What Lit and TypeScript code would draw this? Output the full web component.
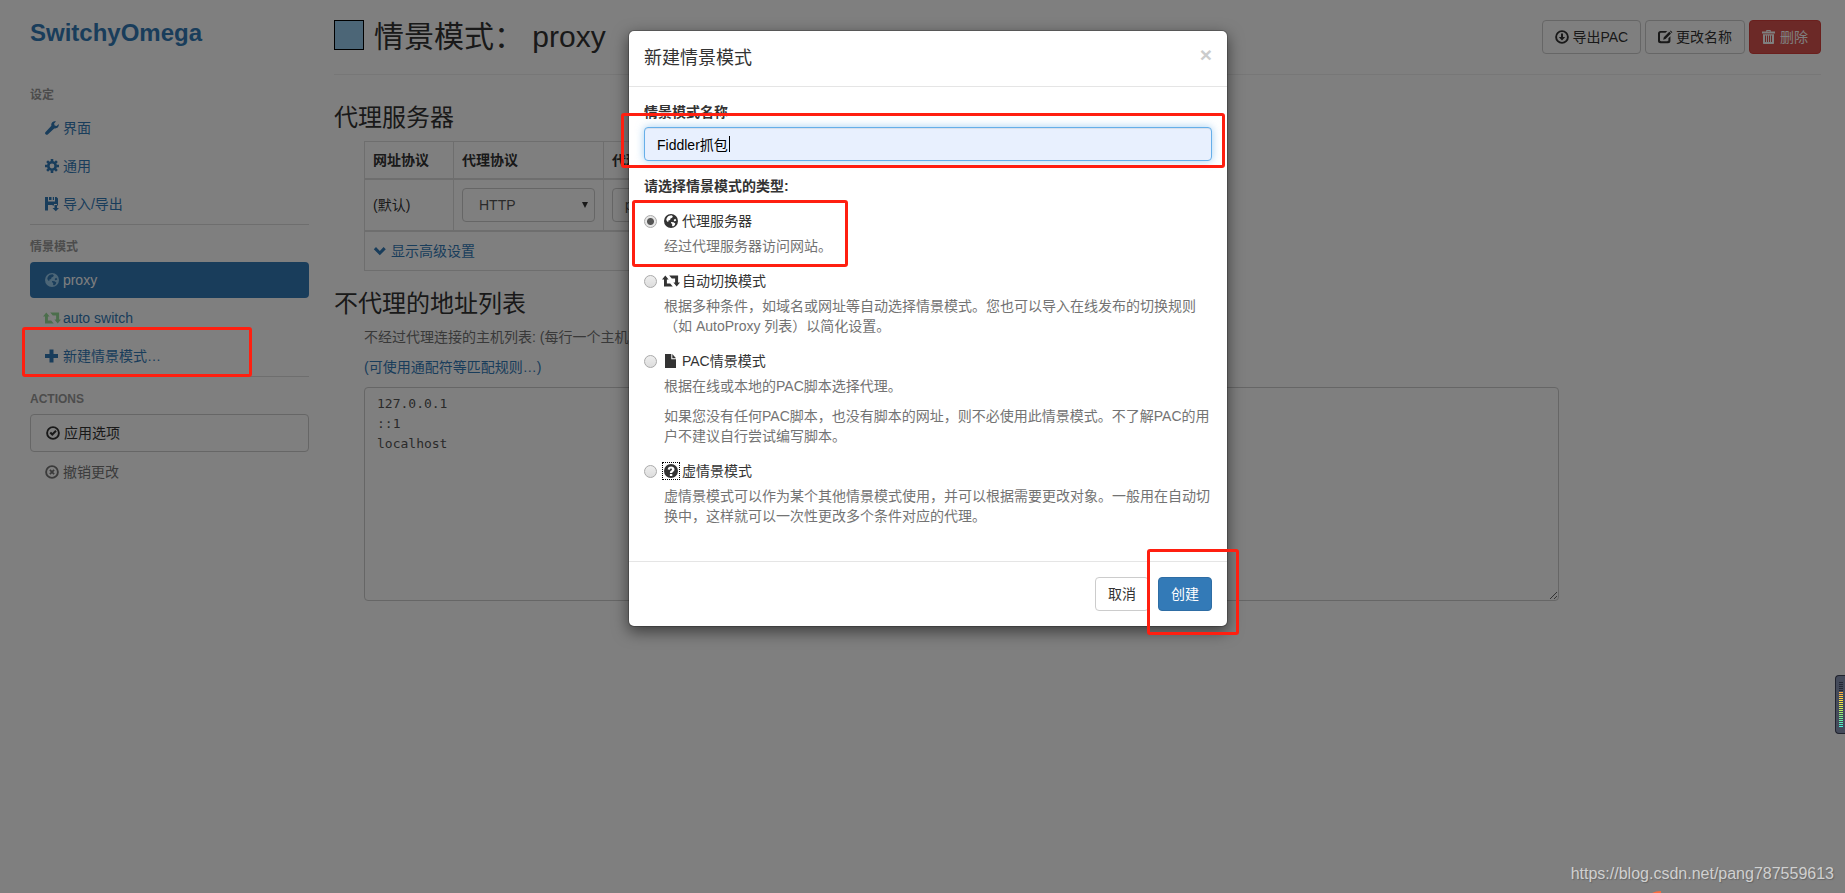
import { LitElement, html, svg, css } from "lit";
import { customElement, state } from "lit/decorators.js";

const glyphs: Record<string, unknown> = {
  wrench: svg`<path d="M13.7 3.1 11.7 5 9.6 4.5 9.1 2.4 11 .4C8.900-.3 6.700.9 6.300 3c-.1.700-.1 1.200.1 1.800L.6 10.900c-.7.700-.7 1.700 0 2.400s1.700.700 2.400 0l6.200-5.900c2.600.7 5-1.500 4.500-4.300z"/>`,
  cog: svg`<circle cx="7" cy="7" r="3.7" fill="none" stroke="currentColor" stroke-width="2.6"/><path fill="none" stroke="currentColor" stroke-width="2.6" d="M7 0v2.500M7 11.500V14M0 7h2.500M11.500 7H14M2.100 2.100l1.700 1.700M10.200 10.200l1.700 1.700M2.100 11.900l1.700-1.700M10.200 3.800l1.700-1.700"/>`,
  save: svg`<path d="M0 0h3v4.500h7V0h1.500L13 1.500V8.500h-1V7H9v1.500H7.500V8H3v5.500H0zM4 0h2.500v3H4zM7.800 0H9v3H7.800zM9.500 8h2.500v3h2l-3.200 3.300L7.500 11h2z"/>`,
  globe: svg`<path fill-rule="evenodd" d="M7 0a7 7 0 1 0 0 14A7 7 0 0 0 7 0zM5.200 1.700l2.300-.4 1.300 1-.6 1.500-1.700.8-.4 1.500-2 .6.4 1.200-1.400-.5-.8-1.700C2.700 3.600 3.700 2.300 5.200 1.700zM9.800 5.800l1.500-1 1 1.400-.8.900-1.500.1zM7.200 8l2.300.3 1.800 1.200-.6 1.700L9 12.500l-.9-.8.1-1.700-1.300-.9z"/>`,
  retweet: svg`<path d="M-2 5.500 1.300 1.500 4.600 5.500H2.900V9.500H6.200L8.800 12.500H0V5.500zM5.200 1.500h8.900v7H16L12.700 12.500 9.400 8.500h1.700v-4H7.800z"/>`,
  plus: svg`<path d="M4.500.5h4v4.500h4.500v4H8.500v4.500h-4V9H0V5h4.500z"/>`,
  ok: svg`<circle cx="7" cy="7" r="5.900" fill="none" stroke="currentColor" stroke-width="1.900"/><path d="M3.500 7.200 5 5.800l1.300 1.300 3-3 1.400 1.400-4.400 4.500z"/>`,
  remove: svg`<circle cx="7" cy="7" r="5.900" fill="none" stroke="currentColor" stroke-width="1.900"/><path fill="none" stroke="currentColor" stroke-width="1.800" d="M4.900 4.900l4.200 4.200M9.100 4.900 4.900 9.100"/>`,
  download: svg`<circle cx="7" cy="7" r="5.900" fill="none" stroke="currentColor" stroke-width="1.900"/><path d="M6 3.500h2v3.500h2.200L7 10.500 3.800 7H6z"/>`,
  edit: svg`<path d="M2.500 1h6.800L7.500 2.800H3.200c-.8 0-1.200.4-1.200 1.200v6c0 .8.400 1.200 1.200 1.200h6c.8 0 1.200-.4 1.200-1.200V8.300l2-2V11c0 1.300-1 2.300-2.300 2.300H2.500C1 13.300 0 12.300 0 11V3.300C0 2 1 1 2.500 1zM11.300 1.800l1.700 1.700-5.500 5.500-2.300.7.600-2.400zM12 1.200l.7-.7 1.700 1.700-.7.700z"/>`,
  trash: svg`<path fill-rule="evenodd" d="M4.300 1.500V0h4.400v1.500H13v2H0v-2zM5.300 1v.5h2.400V1zM1 4.300h11V13c0 .6-.4 1-1 1H2c-.6 0-1-.4-1-1zM3 5.500V12h1V5.500zM5 5.500V12h1V5.500zM7 5.500V12h1V5.500zM9 5.500V12h1V5.500z"/>`,
  chevron: svg`<path d="M.8 5.300 3 3.100l3.800 3.800 3.800-3.800 2.200 2.200-6 6z"/>`,
  file: svg`<path d="M1 0h6.300v5.200H12V14H1zM8.300 0 12 4.200H8.300z"/>`,
  question: svg`<path fill-rule="evenodd" d="M7 0a7 7 0 1 0 0 14A7 7 0 0 0 7 0zM3.700 5.600C3.800 3.600 5 2.500 7.100 2.500s3.400 1.100 3.400 2.800c0 1.200-.6 1.900-1.400 2.500-.6.400-.8.700-.8 1.200H5.900c0-1.200.4-1.800 1.200-2.400.600-.4.900-.7.900-1.200 0-.5-.3-.8-.9-.8-.7 0-1 .400-1.100 1.100zM5.900 9.900h2.400V12H5.900z"/>`,
};

const icon = (name: string, tone = "") => html`<svg
  class="icon ${tone}"
  viewBox="0 0 14 14"
  aria-hidden="true"
>${glyphs[name]}</svg>`;

const kinds = [
  { id: "fixed", icon: "globe", name: "代理服务器", help: ["经过代理服务器访问网站。"] },
  {
    id: "switch",
    icon: "retweet",
    name: "自动切换模式",
    help: [
      "根据多种条件，如域名或网址等自动选择情景模式。您也可以导入在线发布的切换规则（如 AutoProxy 列表）以简化设置。",
    ],
  },
  {
    id: "pac",
    icon: "file",
    name: "PAC情景模式",
    help: [
      "根据在线或本地的PAC脚本选择代理。",
      "如果您没有任何PAC脚本，也没有脚本的网址，则不必使用此情景模式。不了解PAC的用户不建议自行尝试编写脚本。",
    ],
  },
  {
    id: "virtual",
    icon: "question",
    name: "虚情景模式",
    help: [
      "虚情景模式可以作为某个其他情景模式使用，并可以根据需要更改对象。一般用在自动切换中，这样就可以一次性更改多个条件对应的代理。",
    ],
  },
];

@customElement("app-root")
export class AppRoot extends LitElement {
  @state() private kind = "fixed";

  static styles = css`
    :host {
      display: block;
      position: relative;
      min-height: 100vh;
      overflow: hidden;
      background: #fff;
      color: #333;
      font: 14px/20px "Liberation Sans", Arial, "Noto Sans CJK SC", sans-serif;
    }
    *, *::before, *::after { box-sizing: border-box; }
    h1, h2, h3, h4, p, ul { margin: 0; padding: 0; font-weight: 400; }
    ul { list-style: none; }
    a { color: #337ab7; text-decoration: none; }
    button, input, select, textarea { font: inherit; color: inherit; margin: 0; }
    .icon {
      width: 14px;
      height: 14px;
      fill: currentColor;
      overflow: visible;
      vertical-align: -2px;
    }
    .blue { color: #9ce; }
    .green { color: #9d9; }

    .page { display: flex; }
    .side { flex: none; width: 309px; padding: 18px 0 0 30px; }
    .side .brand { font-size: 24px; line-height: 30px; font-weight: 700; color: #337ab7; }
    .nav { display: flex; flex-direction: column; gap: 2px; padding-top: 25px; }
    .head {
      padding: 12px 0 3px;
      font-size: 12px;
      font-weight: 700;
      color: #999;
      text-transform: uppercase;
    }
    .rule { height: 1px; background: #ddd; }
    .rule + .head { margin-top: -2px; }
    .item { display: block; padding: 8px 15px; border-radius: 4px; }
    .active { background: #337ab7; color: #fff; }
    .apply, .discard {
      width: 100%;
      padding: 8px 15px;
      border: 1px solid #ccc;
      border-radius: 4px;
      background: #fff;
      text-align: left;
    }
    .discard { border: 0; color: #777; }

    .main { flex: 1; min-width: 0; padding: 20px 24px 0 25px; }
    .top {
      display: flex;
      gap: 10px;
      padding-bottom: 20px;
      border-bottom: 1px solid #eee;
    }
    .swatch { width: 30px; height: 30px; border: 1px solid #000; background: #9ce; }
    .title { flex: 1; font-size: 30px; line-height: 34px; }
    .tools { display: flex; gap: 4px; }
    .btn {
      height: 34px;
      padding: 6px 12px;
      border: 1px solid #ccc;
      border-radius: 4px;
      background: #fff;
      white-space: nowrap;
    }
    .danger { background: #d9534f; border-color: #d43f3a; color: #fff; }
    .primary { background: #337ab7; border-color: #2e6da4; color: #fff; }
    .section { font-size: 24px; line-height: 26px; margin: 30px 0 10px; }
    .grid + .section { margin-top: 20px; }
    .grid { width: 50%; margin-left: 30px; border-collapse: collapse; table-layout: fixed; }
    .scheme { width: 89px; }
    .proto { width: 150px; }
    th, td { padding: 8px; border: 1px solid #ddd; text-align: left; }
    th { border-bottom-width: 2px; font-weight: 700; }
    tfoot td { padding: 9px 8px; border-top-width: 2px; }
    .link { color: #337ab7; }
    .pick { position: relative; display: block; }
    .pick .icon { position: absolute; right: 6px; top: 13px; width: 8px; height: 8px; }
    .field {
      display: block;
      width: 100%;
      height: 34px;
      padding: 6px 12px;
      border: 1px solid #ccc;
      border-radius: 4px;
      background: #fff;
      color: #555;
    }
    select.field { appearance: none; padding-left: 16px; }
    .bypass { display: flex; flex-direction: column; gap: 10px; padding-left: 30px; }
    .hint { color: #737373; }
    textarea.field {
      width: 82%;
      height: 214px;
      font: 13px/20px "DejaVu Sans Mono", monospace;
      resize: both;
    }

    .veil {
      position: absolute;
      inset: 0;
      padding: 30px 0 0 11px;
      background: rgba(0, 0, 0, 0.5);
    }
    .modal {
      position: relative;
      width: 600px;
      margin: 0 auto;
      border: 1px solid rgba(0, 0, 0, 0.2);
      border-radius: 6px;
      background: #fff;
      background-clip: padding-box;
      box-shadow: 0 5px 15px rgba(0, 0, 0, 0.5);
    }
    .mhead {
      display: flex;
      justify-content: space-between;
      align-items: flex-start;
      padding: 15px;
      border-bottom: 1px solid #e5e5e5;
    }
    .mtitle { font-size: 18px; line-height: 25px; }
    .close {
      padding: 0;
      border: 0;
      background: none;
      font-size: 21px;
      line-height: 18px;
      font-weight: 700;
      color: #ccc;
    }
    .mbody { padding: 15px 15px 35px; }
    .label { display: block; margin-bottom: 5px; font-weight: 700; }
    .entry { position: relative; margin-bottom: 15px; }
    .entry .field {
      border-color: #66afe9;
      background: #e8f0fe;
      color: #000;
      outline: 0;
      box-shadow: inset 0 1px 1px rgba(0, 0, 0, 0.075), 0 0 8px rgba(102, 175, 233, 0.6);
    }
    .caret { position: absolute; left: 85px; top: 9px; width: 1px; height: 16px; background: #000; }
    .kinds { display: grid; gap: 15px; padding-top: 10px; }
    .kind { display: grid; grid-template-columns: 13px 1fr; column-gap: 7px; }
    .kind input {
      appearance: none;
      width: 13px;
      height: 13px;
      margin-top: 4px;
      border: 1px solid #aaa;
      border-radius: 50%;
      background: linear-gradient(#eee, #ddd);
    }
    .kind input:checked { background: radial-gradient(circle, #555 3px, #e6e6e6 4px); }
    .help { grid-column: 2; display: grid; gap: 10px; margin-top: 5px; color: #737373; }
    .question .icon { outline: 1px dotted #000; outline-offset: 1px; }
    .mfoot {
      display: flex;
      justify-content: flex-end;
      gap: 9px;
      padding: 15px;
      border-top: 1px solid #e5e5e5;
    }

    .mark { position: absolute; border: 3px solid #ff1f10; border-radius: 3px; pointer-events: none; }
    .mark-new { left: 22px; top: 327px; width: 230px; height: 50px; }
    .mark-name { left: -8px; right: 2px; top: 82px; height: 55px; }
    .mark-kind { left: 3px; top: 169px; width: 216px; height: 67px; }
    .mark-create { right: -12px; bottom: -9px; width: 92px; height: 86px; }
    .meter {
      position: absolute;
      right: 0;
      top: 675px;
      width: 10px;
      height: 59px;
      padding: 6px 2px 0 3px;
      border: 1px solid #20232e;
      border-right: 0;
      border-radius: 4px 0 0 4px;
      background: #454b5b;
    }
    .bars {
      height: 46px;
      background:
        repeating-linear-gradient(transparent 0 1px, #454b5b 1px 2px),
        linear-gradient(#252834 0 10px, #ffa840 10px, #ffe040 18px, #d0f050 26px, #80f088 34px, #40f0e0 46px);
    }
    .credit {
      position: absolute;
      right: 11px;
      bottom: 9px;
      font-size: 16px;
      color: #d0d0d0;
      text-shadow: 1px 1px 1px #666;
    }
    .spark { position: absolute; left: 1652px; bottom: 0; width: 10px; height: 2px; fill: #ff6a3c; }
  `;

  private nav(glyph: string, text: string, tone = "", active = false) {
    return html`<li>
      <a class="item ${active ? "active" : ""}" href="#">${icon(glyph, tone)} ${text}</a>
    </li>`;
  }

  render() {
    return html`
      <div class="page">
        <aside class="side">
          <h1 class="brand">SwitchyOmega</h1>
          <ul class="nav">
            <li class="head">设定</li>
            ${this.nav("wrench", "界面")} ${this.nav("cog", "通用")}
            ${this.nav("save", "导入/导出")}
            <li class="rule"></li>
            <li class="head">情景模式</li>
            ${this.nav("globe", "proxy", "blue", true)}
            ${this.nav("retweet", "auto switch", "green")}
            ${this.nav("plus", "新建情景模式…")}
            <li class="rule"></li>
            <li class="head">Actions</li>
            <li><button class="apply">${icon("ok")} 应用选项</button></li>
            <li><button class="discard">${icon("remove")} 撤销更改</button></li>
          </ul>
        </aside>

        <main class="main">
          <header class="top">
            <span class="swatch"></span>
            <h2 class="title">情景模式： proxy</h2>
            <div class="tools">
              <button class="btn">${icon("download")} 导出PAC</button>
              <button class="btn">${icon("edit")} 更改名称</button>
              <button class="btn danger">${icon("trash")} 删除</button>
            </div>
          </header>

          <h3 class="section">代理服务器</h3>
          <table class="grid">
            <thead>
              <tr>
                <th class="scheme">网址协议</th>
                <th class="proto">代理协议</th>
                <th>代理服务器</th>
              </tr>
            </thead>
            <tbody>
              <tr>
                <td>(默认)</td>
                <td>
                  <span class="pick">
                    <select class="field" aria-label="代理协议">
                      <option>HTTP</option>
                    </select>
                    <svg class="icon" viewBox="0 0 8 8" aria-hidden="true"><path d="M1 1h6L4 7z" /></svg>
                  </span>
                </td>
                <td><input class="field" aria-label="代理服务器" value="proxy" /></td>
              </tr>
            </tbody>
            <tfoot>
              <tr>
                <td colspan="3"><a href="#">${icon("chevron", "link")} 显示高级设置</a></td>
              </tr>
            </tfoot>
          </table>

          <h3 class="section">不代理的地址列表</h3>
          <div class="bypass">
            <label class="hint" for="bypass">不经过代理连接的主机列表: (每行一个主机)</label>
            <p><a href="#">(可使用通配符等匹配规则…)</a></p>
            <textarea class="field" id="bypass" .value=${"127.0.0.1\n::1\nlocalhost"}></textarea>
          </div>
        </main>
      </div>

      <div class="veil">
        <div class="modal" role="dialog" aria-labelledby="mtitle">
          <header class="mhead">
            <h4 class="mtitle" id="mtitle">新建情景模式</h4>
            <button class="close">×</button>
          </header>
          <div class="mbody">
            <label class="label" for="name">情景模式名称</label>
            <div class="entry">
              <input class="field" id="name" value="Fiddler抓包" />
              <span class="caret"></span>
            </div>
            <span class="label" id="kinds">请选择情景模式的类型:</span>
            <div class="kinds" role="radiogroup" aria-labelledby="kinds">
              ${kinds.map(
                (k) => html`<div class="kind ${k.icon}">
                  <input
                    type="radio"
                    name="kind"
                    id=${k.id}
                    .checked=${this.kind === k.id}
                    @change=${() => (this.kind = k.id)}
                  />
                  <label for=${k.id}>${icon(k.icon)} ${k.name}</label>
                  <div class="help">${k.help.map((t) => html`<p>${t}</p>`)}</div>
                </div>`
              )}
            </div>
          </div>
          <footer class="mfoot">
            <button class="btn">取消</button>
            <button class="btn primary">创建</button>
          </footer>
          <span class="mark mark-name"></span>
          <span class="mark mark-kind"></span>
          <span class="mark mark-create"></span>
        </div>
      </div>

      <span class="mark mark-new"></span>
      <div class="meter"><div class="bars"></div></div>
      <span class="credit">https://blog.csdn.net/pang787559613</span>
      <svg class="spark" viewBox="0 0 10 2" aria-hidden="true"><path d="M0 2Q4 0 9 0L9 2z" /></svg>
    `;
  }
}
